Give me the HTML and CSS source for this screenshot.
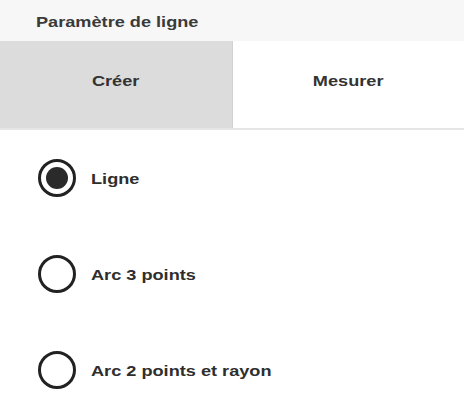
FILE: index.html
```html
<!DOCTYPE html>
<html lang="fr">
<head>
<meta charset="utf-8">
<title>Paramètre de ligne</title>
<link rel="stylesheet" href="styles.css">
</head>
<body>
<div class="panel">
  <div class="header"><span class="txt">Paramètre de ligne</span></div>
  <div class="tabs">
    <div class="tab active"><span class="txt center">Créer</span></div>
    <div class="tab"><span class="txt center">Mesurer</span></div>
  </div>
  <div class="options">
    <label class="option">
      <span class="radio checked"><span class="dot"></span></span>
      <span class="txt">Ligne</span>
    </label>
    <label class="option">
      <span class="radio"></span>
      <span class="txt">Arc 3 points</span>
    </label>
    <label class="option">
      <span class="radio"></span>
      <span class="txt">Arc 2 points et rayon</span>
    </label>
  </div>
</div>
</body>
</html>
```
FILE: styles.css
```css
html, body {
  margin: 0;
  padding: 0;
  background: #ffffff;
}
body {
  font-family: "Liberation Sans", Arial, sans-serif;
  font-weight: bold;
  font-size: 15px;
  color: #2e2e2e;
  overflow: hidden;
}
.panel {
  width: 464px;
  display: flex;
  flex-direction: column;
}
.txt {
  display: inline-block;
  transform: scaleX(1.21);
  transform-origin: left center;
  white-space: nowrap;
}
.txt.center {
  transform-origin: center center;
}
.header {
  height: 41px;
  background: #f7f7f7;
  display: flex;
  align-items: center;
  padding-left: 36px;
  padding-top: 1px;
  box-sizing: border-box;
  color: #3a3a3a;
}
.tabs {
  display: flex;
  height: 89px;
  border-bottom: 2px solid #e6e6e6;
  box-sizing: border-box;
}
.tab {
  flex: 1;
  display: flex;
  align-items: center;
  justify-content: center;
  padding-bottom: 8px;
  background: #ffffff;
  color: #333333;
}
.tab.active {
  background: #dcdcdc;
  border-right: 1px solid #d2d2d2;
}
.options {
  display: flex;
  flex-direction: column;
}
.option {
  height: 96px;
  display: flex;
  align-items: center;
  gap: 15px;
  padding-left: 38px;
}
.radio {
  width: 38px;
  height: 38px;
  box-sizing: border-box;
  border: 3px solid #222222;
  border-radius: 50%;
  display: flex;
  align-items: center;
  justify-content: center;
  flex-shrink: 0;
}
.dot {
  width: 22px;
  height: 22px;
  border-radius: 50%;
  background: #2a2a2a;
}
```
